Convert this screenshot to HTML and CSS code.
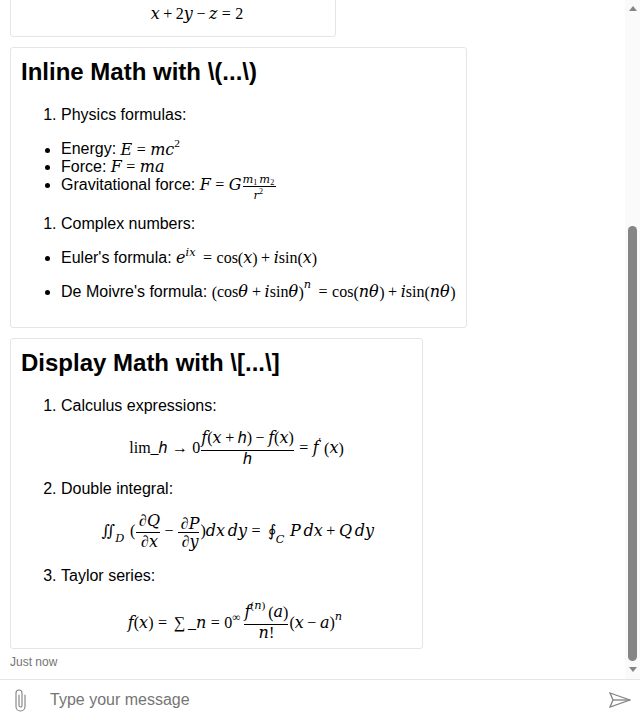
FILE: index.html
```html
<!DOCTYPE html>
<html lang="en">
<head>
<meta charset="utf-8">
<title>Chat</title>
<link rel="stylesheet" href="styles.css">
</head>
<body>
<div class="chat">
  <div class="viewport">
    <div class="messages">
      <div class="thread">
        <div class="card card-first">
          <math display="block"><mi>x</mi><mo>+</mo><mn>2</mn><mi>y</mi><mo>−</mo><mi>z</mi><mo>=</mo><mn>2</mn></math>
        </div>
        <div class="card card-inline">
          <h2>Inline Math with \(...\)</h2>
          <ol><li>Physics formulas:</li></ol>
          <ul>
            <li class="line-short">Energy: <math><mi>E</mi><mo>=</mo><mi>m</mi><msup><mi>c</mi><mn>2</mn></msup></math></li>
            <li>Force: <math><mi>F</mi><mo>=</mo><mi>m</mi><mi>a</mi></math></li>
            <li>Gravitational force: <math><mi>F</mi><mo>=</mo><mi>G</mi><mfrac><mrow><msub><mi>m</mi><mn>1</mn></msub><msub><mi>m</mi><mn>2</mn></msub></mrow><msup><mi>r</mi><mn>2</mn></msup></mfrac></math></li>
          </ul>
          <ol><li>Complex numbers:</li></ol>
          <ul>
            <li><p class="line-short">Euler's formula: <math><msup><mi>e</mi><mrow><mi>i</mi><mi>x</mi></mrow></msup><mo>=</mo><mi>cos</mi><mo>(</mo><mi>x</mi><mo>)</mo><mo>+</mo><mi>i</mi><mi>sin</mi><mo>(</mo><mi>x</mi><mo>)</mo></math></p></li>
            <li><p>De Moivre's formula: <math><msup><mrow><mo>(</mo><mi>cos</mi><mi class="theta" mathvariant="normal">θ</mi><mo>+</mo><mi>i</mi><mi>sin</mi><mi class="theta" mathvariant="normal">θ</mi><mo>)</mo></mrow><mi>n</mi></msup><mo>=</mo><mi>cos</mi><mo>(</mo><mi>n</mi><mi class="theta" mathvariant="normal">θ</mi><mo>)</mo><mo>+</mo><mi>i</mi><mi>sin</mi><mo>(</mo><mi>n</mi><mi class="theta" mathvariant="normal">θ</mi><mo>)</mo></math></p></li>
          </ul>
        </div>
        <div class="card card-display">
          <h2>Display Math with \[...\]</h2>
          <ol>
            <li><p>Calculus expressions:</p>
              <math display="block"><mtext>lim_</mtext><mi class="planck" mathvariant="normal">h</mi><mo>→</mo><mn>0</mn><mfrac><mrow><mi>f</mi><mo>(</mo><mi>x</mi><mo>+</mo><mi class="planck" mathvariant="normal">h</mi><mo>)</mo><mo>−</mo><mi>f</mi><mo>(</mo><mi>x</mi><mo>)</mo></mrow><mi class="planck" mathvariant="normal">h</mi></mfrac><mo>=</mo><msup><mi>f</mi><mo>′</mo></msup><mo>(</mo><mi>x</mi><mo>)</mo></math>
            </li>
            <li><p>Double integral:</p>
              <math display="block"><msub><mo>∬</mo><mi>D</mi></msub><mo>(</mo><mfrac><mrow><mo>∂</mo><mi>Q</mi></mrow><mrow><mo>∂</mo><mi>x</mi></mrow></mfrac><mo>−</mo><mfrac><mrow><mo>∂</mo><mi>P</mi></mrow><mrow><mo>∂</mo><mi>y</mi></mrow></mfrac><mo>)</mo><mi>d</mi><mi>x</mi><mspace width="0.17em"></mspace><mi>d</mi><mi>y</mi><mo>=</mo><msub><mo>∮</mo><mi>C</mi></msub><mi>P</mi><mspace width="0.17em"></mspace><mi>d</mi><mi>x</mi><mo>+</mo><mi>Q</mi><mspace width="0.17em"></mspace><mi>d</mi><mi>y</mi></math>
            </li>
            <li><p>Taylor series:</p>
              <math display="block"><mi>f</mi><mo>(</mo><mi>x</mi><mo>)</mo><mo>=</mo><mo>∑</mo><mtext>_</mtext><mi>n</mi><mo>=</mo><msup><mn>0</mn><mi>∞</mi></msup><mfrac><mrow><msup><mi>f</mi><mrow><mo>(</mo><mi>n</mi><mo>)</mo></mrow></msup><mo>(</mo><mi>a</mi><mo>)</mo></mrow><mrow><mi>n</mi><mo>!</mo></mrow></mfrac><msup><mrow><mo>(</mo><mi>x</mi><mo>−</mo><mi>a</mi><mo>)</mo></mrow><mi>n</mi></msup></math>
            </li>
          </ol>
        </div>
        <div class="timestamp">Just now</div>
      </div>
    </div>
    <div class="scrollbar" aria-hidden="true">
      <span class="arrow-up"></span>
      <span class="thumb"></span>
      <span class="arrow-down"></span>
    </div>
  </div>
  <div class="composer">
    <button class="icon-btn" aria-label="Attach file">
      <svg width="11" height="23" viewBox="0 0 11 23" fill="none" stroke="#808080" stroke-width="1.1" stroke-linecap="round"><path d="M10 6v11.5a4.5 4.5 0 0 1-9 0V4a3 3 0 0 1 6 0v12.5a1.5 1.5 0 0 1-3 0V6"/></svg>
    </button>
    <span class="placeholder">Type your message</span>
    <button class="icon-btn" aria-label="Send">
      <svg width="22" height="16" viewBox="0 0 22 16" fill="none" stroke="#808080" stroke-width="1.3"><path d="M1 1l20 7-20 7 3-7z"/><path d="M4 8h17"/></svg>
    </button>
  </div>
</div>
</body>
</html>
```
FILE: styles.css
```css
html, body {
  margin: 0;
  height: 100%;
}
body {
  font-family: "Liberation Sans", Arial, sans-serif;
  font-size: 16px;
  color: #000;
  background: #fff;
}
math {
  font-family: "Liberation Serif", "DejaVu Serif", serif;
}
.planck {
  font-family: "Liberation Sans", sans-serif;
  font-style: italic;
}
.theta {
  font-family: "DejaVu Serif", serif;
  font-style: italic;
  padding-right: 0.5px;
}
.line-short {
  height: 18px;
}
.chat {
  display: flex;
  flex-direction: column;
  height: 720px;
  overflow: hidden;
}
.viewport {
  position: relative;
  flex: 1;
  min-height: 0;
  display: flex;
}
.messages {
  flex: 1;
  min-width: 0;
  overflow: hidden;
  display: flex;
  flex-direction: column-reverse;
}
.scrollbar {
  position: absolute;
  top: 0;
  right: 0;
  bottom: 0;
  width: 15px;
  box-sizing: border-box;
  padding: 6px 0 7px;
  background: #fafafa;
  display: flex;
  flex-direction: column;
  align-items: center;
}
.arrow-up, .arrow-down {
  width: 0;
  height: 0;
  border-left: 4.5px solid transparent;
  border-right: 4.5px solid transparent;
}
.arrow-up {
  border-bottom: 5px solid #858585;
}
.arrow-down {
  border-top: 5px solid #858585;
}
.thumb {
  width: 9px;
  height: 435px;
  margin-top: auto;
  margin-bottom: 6px;
  background: #858585;
  border-radius: 5px;
}
.thread {
  display: flex;
  flex-direction: column;
  align-items: flex-start;
  gap: 10px;
  padding: 0 10px 10px;
}
.card {
  border: 1px solid #e5e5e5;
  border-radius: 3px;
  padding: 0 10px 10px;
  box-sizing: border-box;
  background: #fff;
}
.card-first {
  width: 326px;
  padding: 320px 10px 13px 58px;
}
.card-inline {
  padding-bottom: 9px;
}
.card-display {
  width: 413px;
}
.card h2 {
  font-size: 24px;
  font-weight: 700;
  margin: 10px 0 21px;
  line-height: 27px;
}
.card ol, .card ul {
  margin: 16px 0;
  padding-left: 40px;
}
.card h2 + ol {
  margin-top: 0;
}
.card p {
  margin: 16px 0;
}
.card-display ol {
  margin-bottom: 0;
}
.card-display li > p:first-child {
  margin: 0 0 16px;
}
.card-display li {
  margin-bottom: 16px;
}
.card-display li:last-child {
  margin-bottom: 0;
}
.timestamp {
  font-size: 12px;
  line-height: 14px;
  color: #757575;
  margin-top: -4px;
}
.composer {
  flex: none;
  height: 41px;
  box-sizing: border-box;
  border-top: 1px solid #e5e5e5;
  display: flex;
  align-items: center;
  padding: 0 9px 0 15px;
  background: #fff;
}
.icon-btn {
  border: 0;
  background: none;
  padding: 0;
  display: flex;
  align-items: center;
}
.placeholder {
  flex: 1;
  margin-left: 24px;
  color: #757575;
  font-size: 16px;
}
```
